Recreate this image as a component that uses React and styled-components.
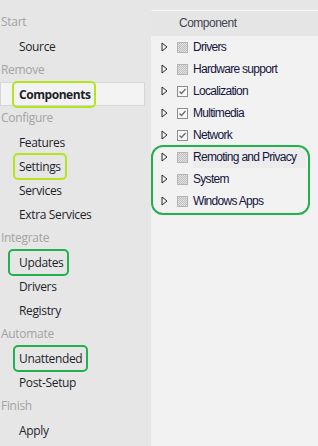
import React from 'react';
import styled, { createGlobalStyle, css } from 'styled-components';

const GlobalStyle = createGlobalStyle`
  html, body {
    margin: 0;
    padding: 0;
    background: #e6e6e6;
  }
  body {
    width: 318px;
    height: 446px;
    overflow: hidden;
    font-family: 'Open Sans', 'Noto Sans', sans-serif;
  }
`;

const LIME = '#b5e61d';
const GREEN = '#22b14c';

const nav = [
  { group: 'Start', items: [{ label: 'Source' }] },
  { group: 'Remove', items: [{ label: 'Components', selected: true, mark: LIME, markLeft: 7 }] },
  {
    group: 'Configure',
    items: [
      { label: 'Features' },
      { label: 'Settings', mark: LIME, markLeft: 6 },
      { label: 'Services' },
      { label: 'Extra Services' },
    ],
  },
  {
    group: 'Integrate',
    items: [{ label: 'Updates', mark: GREEN, markLeft: 11 }, { label: 'Drivers' }, { label: 'Registry' }],
  },
  { group: 'Automate', items: [{ label: 'Unattended', mark: GREEN, markLeft: 6 }, { label: 'Post-Setup' }] },
  { group: 'Finish', items: [{ label: 'Apply' }] },
];

const components = [
  { name: 'Drivers', state: 'partial' },
  { name: 'Hardware support', state: 'partial' },
  { name: 'Localization', state: 'checked' },
  { name: 'Multimedia', state: 'checked' },
  { name: 'Network', state: 'checked' },
];

const marked = [
  { name: 'Remoting and Privacy', state: 'partial', hover: true },
  { name: 'System', state: 'partial' },
  { name: 'Windows Apps', state: 'partial' },
];

const Expander = () => (
  <ExpandIcon width="7" height="10" viewBox="0 0 7 10">
    <path d="M1 1 L6 5 L1 9 Z" fill="none" stroke="#2b2b2b" strokeWidth="1" />
  </ExpandIcon>
);

const TreeRow = ({ name, state, hover }) => (
  <Row>
    <Expander />
    <Check $state={state}>
      {state === 'checked' && (
        <svg width="9" height="9" viewBox="0 0 9 9">
          <path d="M1.5 4.5 L3.5 6.5 L7.5 2" fill="none" stroke="#6b6b6b" strokeWidth="1.3" />
        </svg>
      )}
    </Check>
    <RowText $hover={hover}>{name}</RowText>
  </Row>
);

export default function App() {
  return (
    <>
      <GlobalStyle />
      <Page>
        <Sidebar>
          {nav.map((g) => (
            <React.Fragment key={g.group}>
              <GroupLabel>{g.group}</GroupLabel>
              {g.items.map((it) => (
                <NavItem key={it.label} $selected={it.selected}>
                  <NavText $selected={it.selected} $mark={it.mark} $markLeft={it.markLeft}>
                    {it.label}
                  </NavText>
                </NavItem>
              ))}
            </React.Fragment>
          ))}
        </Sidebar>
        <Panel>
          <Header>Component</Header>
          {components.map((c) => (
            <TreeRow key={c.name} {...c} />
          ))}
          <MarkedGroup>
            {marked.map((c) => (
              <TreeRow key={c.name} {...c} />
            ))}
          </MarkedGroup>
        </Panel>
      </Page>
    </>
  );
}

const Page = styled.div`
  display: flex;
  height: 446px;
  background: #e6e6e6;
`;

const Sidebar = styled.nav`
  width: 145px;
  flex-shrink: 0;
  padding-top: 10px;
  display: flex;
  flex-direction: column;
`;

const GroupLabel = styled.div`
  height: 24px;
  line-height: 24px;
  padding-left: 1px;
  font-size: 12px;
  letter-spacing: -0.3px;
  color: #a3a3a3;
`;

const NavItem = styled.div`
  height: 24px;
  box-sizing: border-box;
  display: flex;
  align-items: center;
  padding-left: 19px;
  ${(p) =>
    p.$selected &&
    css`
      background: #f3f3f3;
      border: 1px solid #d6d6d6;
      padding-left: 18px;
    `}
`;

const NavText = styled.span`
  position: relative;
  font-size: 12px;
  letter-spacing: ${(p) => (p.$selected ? '-0.45px' : '-0.35px')};
  color: #1f1f2a;
  font-weight: ${(p) => (p.$selected ? 700 : 400)};
  ${(p) =>
    p.$mark &&
    css`
      &::after {
        content: '';
        position: absolute;
        top: -5px;
        bottom: -5px;
        left: -${p.$markLeft}px;
        right: -6px;
        border: 2px solid ${p.$mark};
        border-radius: 5px;
      }
    `}
`;

const Panel = styled.section`
  flex: 1;
  margin-top: 10px;
  margin-left: 6px;
  background: #f2f2f2;
  border-top: 1px solid #f4f4f4;
  font-family: 'Liberation Sans', Arial, sans-serif;
`;

const Header = styled.div`
  height: 25px;
  line-height: 24px;
  background: #e5e5e5;
  padding-left: 28px;
  font-size: 12px;
  letter-spacing: -0.5px;
  color: #444450;
`;

const Row = styled.div`
  height: 22px;
  display: flex;
  align-items: center;
  padding-left: 10px;
`;

const ExpandIcon = styled.svg`
  flex-shrink: 0;
  margin-right: 9px;
`;

const Check = styled.span`
  width: 11px;
  height: 11px;
  box-sizing: border-box;
  flex-shrink: 0;
  display: flex;
  align-items: center;
  justify-content: center;
  border: 1px solid ${(p) => (p.$state === 'checked' ? '#8c8c8c' : '#b4b4b4')};
  background: ${(p) =>
    p.$state === 'partial'
      ? 'repeating-conic-gradient(#bdbdbd 0% 25%, #e4e4e4 0% 50%) 0 0 / 2px 2px'
      : '#f7f7f7'};
`;

const RowText = styled.span`
  margin-left: 5px;
  padding: 0 4px 0 0;
  height: 22px;
  line-height: 22px;
  font-size: 12px;
  letter-spacing: -0.7px;
  color: #14143c;
  ${(p) =>
    p.$hover &&
    css`
      background: #ececec;
      flex: 1;
      margin-right: 12px;
    `}
`;

const MarkedGroup = styled.div`
  position: relative;
  &::after {
    content: '';
    position: absolute;
    top: -1px;
    bottom: -3px;
    left: 0;
    right: 8px;
    border: 2px solid ${GREEN};
    border-radius: 12px;
    pointer-events: none;
  }
`;
